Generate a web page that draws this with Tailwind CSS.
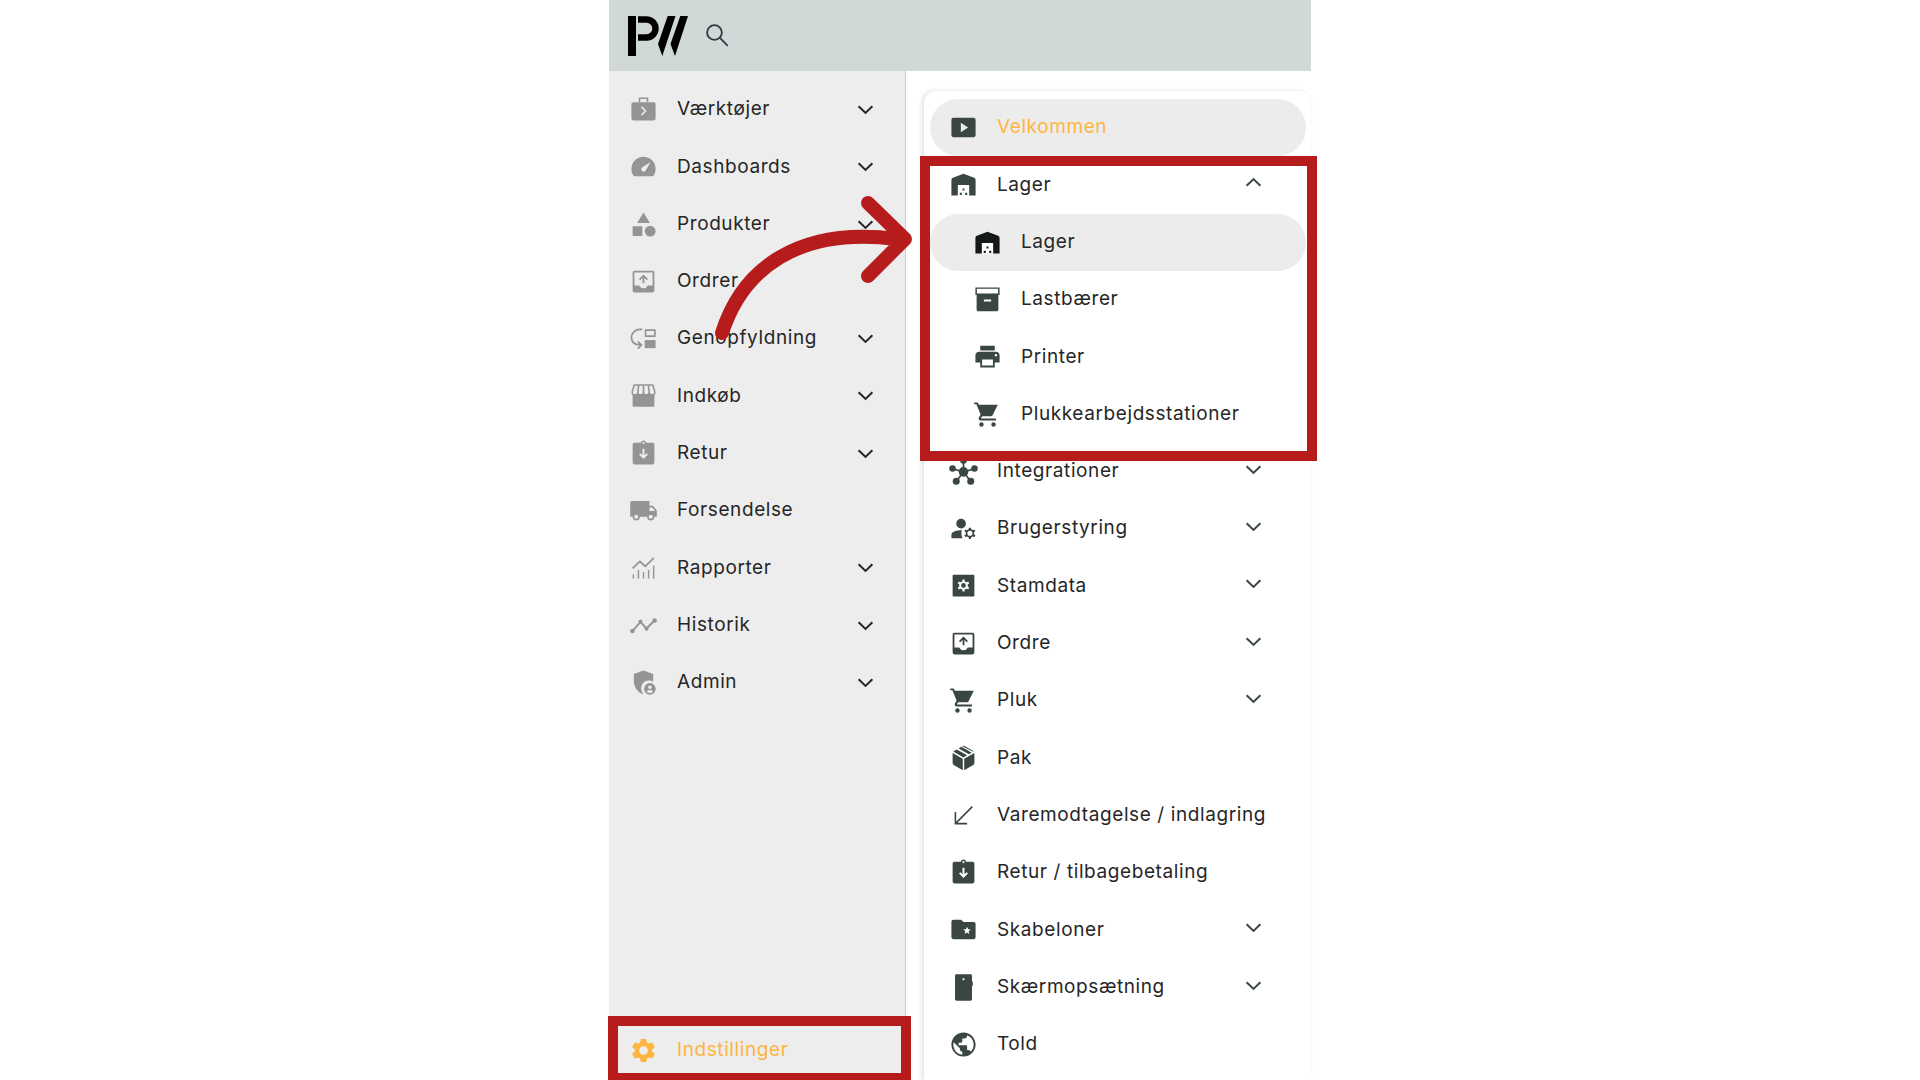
<!DOCTYPE html>
<html lang="da">
<head>
    <meta charset="UTF-8">
    <meta name="viewport" content="width=device-width, initial-scale=1.0">
    <title>Indstillinger - Lager</title>
    <script src="https://cdn.jsdelivr.net/npm/@tailwindcss/browser@4"></script>
</head>
<body class="bg-white font-['Inter',sans-serif] text-[19px] tracking-[0.03125em] text-[#262626] overflow-hidden">

    <!-- Ikoner -->
    <svg class="hidden" xmlns="http://www.w3.org/2000/svg">
        <symbol id="chevron" viewBox="0 0 24 24"><path fill="none" stroke="currentColor" stroke-width="1.7" d="M6.3 9.3 12 14.8l5.700-5.500"/></symbol>
        <symbol id="search" viewBox="0 0 24 24"><g fill="none" stroke="currentColor" stroke-width="1.500"><circle cx="9.500" cy="9.500" r="6.100"/><path d="m14 14 6.500 6.500"/></g></symbol>
        <symbol id="tools" viewBox="0 0 24 24">
            <path fill="none" stroke="currentColor" stroke-width="1.300" d="M8.700 6V2.700h6.600V6"/>
            <path fill="currentColor" d="M3.500 6h17A1.500 1.500 0 0 1 22 7.500v12a1.500 1.500 0 0 1-1.500 1.500h-17A1.500 1.500 0 0 1 2 19.500v-12A1.500 1.500 0 0 1 3.500 6z"/>
            <path fill="none" stroke="#ededed" stroke-width="1.300" d="m10.300 9.800 3.400 3.400-3.400 3.400"/>
        </symbol>
        <symbol id="gauge" viewBox="0 0 24 24"><path fill="currentColor" fill-rule="evenodd" d="M12 4A10 10 0 0 0 2 14c0 1.900.5 3.700 1.400 5.200.3.500.8.800 1.400.8h14.400c.6 0 1.100-.3 1.400-.8.9-1.500 1.400-3.300 1.400-5.200A10 10 0 0 0 12 4zm5.800 4.300-4.100 7.300a2 2 0 1 1-3-2.700z"/></symbol>
        <symbol id="shapes" viewBox="0 0 24 24"><g fill="currentColor"><path d="m12 2 5.300 8.700H6.700z"/><path d="M3 13.500h8v8H3z"/><circle cx="17.500" cy="17.500" r="4.500"/></g></symbol>
        <symbol id="outbox" viewBox="0 0 24 24">
            <path fill="currentColor" fill-rule="evenodd" d="M4.500 3h15A1.500 1.500 0 0 1 21 4.500v15a1.500 1.500 0 0 1-1.500 1.500h-15A1.500 1.500 0 0 1 3 19.500v-15A1.500 1.500 0 0 1 4.500 3zm0 1.500v10.800h3.900a4 4 0 0 0 7.200 0h3.900V4.500z"/>
            <path fill="none" stroke="currentColor" stroke-width="1.500" d="M12 13.500V7.300M8.800 10.400 12 7.200l3.200 3.200"/>
        </symbol>
        <symbol id="refill" viewBox="0 0 24 24">
            <path fill="none" stroke="currentColor" stroke-width="1.400" d="M11 4.500H9A7 7 0 0 0 2 11c0 4 2.800 6.300 7.500 6.300M7.300 14.300l3 3-3 3M13.700 5h7.700v5h-7.700z"/>
            <path fill="currentColor" d="M13 13.300h9V20h-9z"/>
        </symbol>
        <symbol id="store" viewBox="0 0 24 24">
            <path fill="currentColor" d="M3 11h18v9.500a.8.800 0 0 1-.8.800H3.800a.8.800 0 0 1-.8-.8z"/>
            <path fill="none" stroke="currentColor" stroke-width="1.300" d="M4.300 3.300h15.400l1.600 5.500c.3 1.700-.7 2.900-2.200 2.900-1.300 0-2.300-.9-2.400-2.200-.1 1.300-1 2.200-2.300 2.200S12.100 10.800 12 9.500c-.1 1.300-1.100 2.200-2.400 2.200s-2.200-.9-2.300-2.200c-.1 1.300-1.100 2.200-2.400 2.200-1.500 0-2.500-1.200-2.200-2.900zM12 3.300v6.200M8 3.300l-.7 6.200M16 3.300l.7 6.200"/>
        </symbol>
        <symbol id="return" viewBox="0 0 24 24">
            <path fill="currentColor" fill-rule="evenodd" d="M4.500 3h5.200a2.400 2.400 0 0 1 4.600 0h5.200A1.500 1.500 0 0 1 21 4.500v15a1.500 1.500 0 0 1-1.500 1.500h-15A1.500 1.500 0 0 1 3 19.500v-15A1.500 1.500 0 0 1 4.500 3zm7.500-.5a.9.900 0 1 0 0 1.800.9.900 0 0 0 0-1.800zM11.200 8v5.500L9.400 11.700l-1.100 1.100L12 16.500l3.700-3.700-1.100-1.100-1.800 1.800V8z"/>
        </symbol>
        <symbol id="truck" viewBox="0 0 24 24">
            <path fill="currentColor" fill-rule="evenodd" d="M2.500 4.200H17V8h3l3 4v5.200h-2a3 3 0 0 1-6 0H9a3 3 0 0 1-6 0H1V5.700a1.500 1.500 0 0 1 1.500-1.500zM6 15.500a1.700 1.700 0 1 0 0 3.400 1.700 1.700 0 0 0 0-3.400zm12 0a1.700 1.700 0 1 0 0 3.400 1.700 1.700 0 0 0 0-3.400zM17 9.500v3h4.600l-2.300-3z"/>
        </symbol>
        <symbol id="report" viewBox="0 0 24 24"><g fill="none" stroke="currentColor" stroke-width="1.500"><path d="M3 12.800 9 7l4.500 4L20.600 4"/><path stroke-width="1.200" d="M3.600 17.800V21M7.800 14v7M12 15.800V21M16.200 14v7M20.400 10.300V21"/></g></symbol>
        <symbol id="history" viewBox="0 0 24 24">
            <path fill="none" stroke="currentColor" stroke-width="1.600" d="m3 16.500 6.500-7.500 5 5.500L21 8"/>
            <g fill="currentColor"><circle cx="2.800" cy="16.500" r="1.900"/><circle cx="9.500" cy="8.700" r="1.600"/><circle cx="14.500" cy="14.700" r="1.600"/><circle cx="21.200" cy="7.800" r="1.900"/></g>
        </symbol>
        <symbol id="shield" viewBox="0 0 24 24">
            <path fill="currentColor" d="m12 2 8 3v6.300a6.500 6.500 0 0 0-8.700 9.400l.7 1C7.300 20.500 4 15.900 4 11V5z"/>
            <path fill="currentColor" fill-rule="evenodd" d="M17.300 12.500a4.800 4.800 0 1 0 0 9.600 4.800 4.800 0 0 0 0-9.600zm0 1.900a1.500 1.500 0 1 1 0 3 1.500 1.500 0 0 1 0-3zm0 3.900c1 0 2 .5 2.600 1.200a3.300 3.300 0 0 1-5.200 0c.6-.7 1.600-1.200 2.600-1.200z"/>
        </symbol>
        <symbol id="gear" viewBox="0 0 24 24"><path fill="currentColor" d="M19.140 12.940c.04-.3.060-.61.060-.94 0-.32-.02-.64-.07-.94l2.030-1.580a.49.490 0 0 0 .12-.61l-1.920-3.320a.488.488 0 0 0-.59-.22l-2.390.96c-.5-.38-1.030-.7-1.620-.94l-.36-2.540a.484.484 0 0 0-.48-.41h-3.840c-.24 0-.43.170-.47.410l-.36 2.540c-.59.240-1.130.570-1.620.940l-2.390-.96c-.22-.08-.47 0-.59.220L2.740 8.870c-.12.210-.08.470.120.610l2.030 1.580c-.05.300-.09.630-.09.940s.02.640.070.940l-2.030 1.580a.49.490 0 0 0-.12.610l1.920 3.320c.12.220.370.290.590.220l2.390-.96c.5.380 1.030.7 1.620.940l.36 2.540c.05.240.240.410.480.410h3.840c.24 0 .440-.17.470-.41l.36-2.540c.59-.24 1.130-.56 1.620-.94l2.390.96c.22.080.470 0 .590-.22l1.920-3.320c.12-.22.070-.47-.12-.61l-2.010-1.580zM12 15.600c-1.980 0-3.600-1.620-3.600-3.600s1.620-3.600 3.600-3.600 3.600 1.620 3.600 3.600-1.620 3.600-3.600 3.600z"/></symbol>
        <symbol id="play" viewBox="0 0 24 24"><path fill="currentColor" fill-rule="evenodd" d="M3.500 4h17A1.500 1.500 0 0 1 22 5.500v13a1.500 1.500 0 0 1-1.500 1.500h-17A1.500 1.500 0 0 1 2 18.500v-13A1.500 1.500 0 0 1 3.500 4zM9.800 8v8l6-4z"/></symbol>
        <symbol id="warehouse" viewBox="0 0 24 24">
            <path fill="currentColor" d="M12 3 3.200 6.500A2 2 0 0 0 2 8.300V21h5.300v-8.500h9.400V21H22V8.300a2 2 0 0 0-1.200-1.800z"/>
            <path fill="#fff" d="M7.600 12.500h8.800V21H7.600z"/>
            <path fill="currentColor" d="M11.200 15.300h1.600v1.600h-1.600zM8.900 18.900h1.700v1.700H8.900zM13.400 18.900h1.700v1.700h-1.700z"/>
        </symbol>
        <symbol id="archive" viewBox="0 0 24 24">
            <path fill="#fff" stroke="currentColor" stroke-width="1.200" d="M2.600 2.600h18.800v5H2.600z"/>
            <path fill="currentColor" fill-rule="evenodd" d="M3 8h18v12.500a1.200 1.200 0 0 1-1.200 1.200H4.200A1.200 1.200 0 0 1 3 20.500zm6 4v1.600h6V12z"/>
        </symbol>
        <symbol id="printer" viewBox="0 0 24 24"><path fill="currentColor" d="M19 8H5c-1.660 0-3 1.340-3 3v6h4v4h12v-4h4v-6c0-1.660-1.340-3-3-3zm-2.500 11.500h-9v-5h9zm2.500-7.500c-.55 0-1-.45-1-1s.45-1 1-1 1 .45 1 1-.45 1-1 1zM18 3H6v4h12z"/></symbol>
        <symbol id="cart" viewBox="0 0 24 24"><path fill="currentColor" d="M1 2h2.900l1 2H20.500l-4.300 8.600c-.3.500-.7.800-1.300.8H7.500l-1 1.900H19V17H6.300c-1.300 0-2-1.400-1.400-2.500l1.400-2.600L2.800 3.600H1z"/><circle cx="7" cy="20.300" r="1.800" fill="currentColor"/><circle cx="17" cy="20.300" r="1.800" fill="currentColor"/></symbol>
        <symbol id="hub" viewBox="0 0 24 24">
            <path fill="none" stroke="currentColor" stroke-width="1.400" d="M12 3v9M2.800 9.700 12 12.300l9.200-2.600M6 20.300l6-8 6 8"/>
            <g fill="currentColor"><circle cx="12" cy="12.300" r="4"/><circle cx="12" cy="2.800" r="2.700"/><circle cx="2.900" cy="9.600" r="2.700"/><circle cx="21.100" cy="9.600" r="2.700"/><circle cx="6" cy="20" r="2.900"/><circle cx="18" cy="20" r="2.900"/></g>
        </symbol>
        <symbol id="users" viewBox="0 0 24 24">
            <circle cx="10" cy="8" r="4" fill="currentColor"/>
            <path fill="currentColor" d="M10.700 13.500C7.500 13.200 5 13.900 3.200 15c-.8.500-1.200 1.300-1.200 2.200V20h9.300a7.500 7.500 0 0 1-.6-6.500z"/>
            <g fill="none" stroke="currentColor"><circle cx="17.300" cy="16" r="2.800" stroke-width="1.400"/><path stroke-width="1.800" d="M17.300 11.300v1.900M17.300 18.800v1.900M13.200 13.600l1.700 1M19.700 17.400l1.700 1M13.200 18.400l1.700-1M19.700 14.600l1.700-1"/></g>
        </symbol>
        <symbol id="data" viewBox="0 0 24 24">
            <path fill="currentColor" d="M4 3h16a1 1 0 0 1 1 1v16a1 1 0 0 1-1 1H4a1 1 0 0 1-1-1V4a1 1 0 0 1 1-1z"/>
            <g fill="none" stroke="#fff"><circle cx="12" cy="12" r="2.800" stroke-width="1.600"/><path stroke-width="1.800" d="M12 7v2M12 15v2M7.700 9.500l1.700 1M14.600 13.500l1.700 1M7.700 14.500l1.700-1M14.600 10.500l1.700-1"/></g>
        </symbol>
        <symbol id="package" viewBox="0 0 24 24"><path fill="currentColor" d="M3 8.200 11.400 13v9.500L4 18.300a2 2 0 0 1-1-1.700zM21 8.200 12.600 13v9.500l7.400-4.200a2 2 0 0 0 1-1.700zM3.500 7.100l3-1.700L15 10.200 12 12zM8 4.500l2.200-1.300 8.600 4.900-2.300 1.300zM11.500 2.400a1.500 1.500 0 0 1 1.300 0L20.400 6.800l-.5.5L11 2.700z"/></symbol>
        <symbol id="southwest" viewBox="0 0 24 24"><path fill="none" stroke="currentColor" stroke-width="1.300" d="M19.300 4.700 5.700 18.300M5.300 9v9.700H15"/></symbol>
        <symbol id="folder" viewBox="0 0 24 24"><path fill="currentColor" fill-rule="evenodd" d="M3.500 4H10l2 1.700h8.500A1.500 1.500 0 0 1 22 7.200v11.300a1.500 1.500 0 0 1-1.500 1.500h-17A1.500 1.500 0 0 1 2 18.500v-13A1.500 1.500 0 0 1 3.500 4zm11.400 5.700-.9 2.100-2.200.2 1.700 1.500-.5 2.200 1.900-1.200 1.900 1.200-.5-2.200L18 12l-2.200-.2z"/></symbol>
        <symbol id="device" viewBox="0 0 24 24"><path fill="currentColor" fill-rule="evenodd" d="M6.200 1h11.600A1.200 1.200 0 0 1 19 2.200v4.600l.7.400v3.200l-.7.500v10.900a1.200 1.200 0 0 1-1.200 1.200H6.200A1.200 1.200 0 0 1 5 21.800V2.200A1.200 1.200 0 0 1 6.200 1zM12 4.300a.9.900 0 1 0 0 1.800.9.900 0 0 0 0-1.800z"/></symbol>
        <symbol id="globe" viewBox="0 0 24 24"><path fill="currentColor" d="M12 2C6.480 2 2 6.480 2 12s4.480 10 10 10 10-4.480 10-10S17.520 2 12 2zm-1 18.500c-4.200-.5-7.400-4.100-7.400-8.500 0-.6.080-1.200.200-1.800L9 15v1c0 1.100.9 2 2 2zm6.900-2.500c-.26-.8-1-1.400-1.900-1.400h-1v-3c0-.55-.45-1-1-1H8v-2h2c.55 0 1-.45 1-1V7h2c1.100 0 2-.9 2-2v-.6c3.200 1.200 5.400 4.200 5.400 7.600 0 2.300-.9 4.500-2.500 6z"/></symbol>
    </svg>

    <div class="relative mx-auto flex min-h-screen max-w-[702px] flex-col">

        <!-- Topbar -->
        <header class="flex h-[71px] shrink-0 items-center gap-[15px] bg-[#d0d9d8] px-[19px]">
            <a href="#" aria-label="Forside">
                <svg class="h-10 w-15 text-black" viewBox="0 0 60 40" fill="currentColor">
                    <rect width="8" height="40"/>
                    <path fill="none" stroke="currentColor" stroke-width="6.400" d="M10 3.500h8.500a8.800 8.800 0 0 1 0 18H10"/>
                    <path d="M39.700 0h7.800L34.300 40 30 28zM52.300 0H60L47 40l-4.500-12z"/>
                </svg>
            </a>
            <button type="button" aria-label="Søg" class="text-[#2f3b3a]"><svg class="size-[29px]"><use href="#search"/></svg></button>
        </header>

        <div class="flex flex-1">
            <!-- Hovedmenu -->
            <aside class="flex w-[297px] shrink-0 flex-col border-r border-[#cccccc] bg-[#ededed]">
                <ul class="mt-[10px] grid h-[630px] grid-rows-11 [&_svg:first-child]:text-[#949494] [&_a]:flex [&_a]:h-full [&_a]:items-center [&_a]:gap-[19px] [&_a]:pl-5 [&_button]:flex [&_button]:h-full [&_button]:w-full [&_button]:items-center [&_button]:gap-[19px] [&_button]:pl-5 [&_button]:pr-[25px] [&_svg]:size-[29px] [&_svg]:shrink-0 [&_span]:flex-1 [&_span]:text-left">
                    <li><button type="button"><svg><use href="#tools"/></svg><span>Værktøjer</span><svg><use href="#chevron"/></svg></button></li>
                    <li><button type="button"><svg><use href="#gauge"/></svg><span>Dashboards</span><svg><use href="#chevron"/></svg></button></li>
                    <li><button type="button"><svg><use href="#shapes"/></svg><span>Produkter</span><svg><use href="#chevron"/></svg></button></li>
                    <li><a href="#"><svg><use href="#outbox"/></svg><span>Ordrer</span></a></li>
                    <li><button type="button"><svg><use href="#refill"/></svg><span>Genopfyldning</span><svg><use href="#chevron"/></svg></button></li>
                    <li><button type="button"><svg><use href="#store"/></svg><span>Indkøb</span><svg><use href="#chevron"/></svg></button></li>
                    <li><button type="button"><svg><use href="#return"/></svg><span>Retur</span><svg><use href="#chevron"/></svg></button></li>
                    <li><a href="#"><svg><use href="#truck"/></svg><span>Forsendelse</span></a></li>
                    <li><button type="button"><svg><use href="#report"/></svg><span>Rapporter</span><svg><use href="#chevron"/></svg></button></li>
                    <li><button type="button"><svg><use href="#history"/></svg><span>Historik</span><svg><use href="#chevron"/></svg></button></li>
                    <li><button type="button"><svg><use href="#shield"/></svg><span>Admin</span><svg><use href="#chevron"/></svg></button></li>
                </ul>
                <a href="#" class="relative mt-auto flex h-15 items-center gap-[19px] pl-5 text-[#ffb53f]">
                    <svg class="size-[29px]"><use href="#gear"/></svg>
                    <span>Indstillinger</span>
                    <span class="absolute -top-1 -right-[6px] -bottom-[3px] -left-px z-10 border-10 border-[#b71c1c]"></span>
                </a>
            </aside>

            <!-- Undermenu -->
            <main class="flex flex-1 flex-col bg-white pt-5 pl-[18px]">
                <ul class="grid flex-1 grid-rows-17 rounded-t-xl pt-2 pr-[5px] pb-[7px] pl-[6px] shadow-[-2px_0_4px_rgba(0,0,0,0.13)] [&_a]:flex [&_a]:h-full [&_a]:items-center [&_a]:gap-[19px] [&_a]:rounded-full [&_a]:pl-[19px] [&_button]:flex [&_button]:h-full [&_button]:w-full [&_button]:items-center [&_button]:gap-[19px] [&_button]:pl-[19px] [&_button]:pr-[38px] [&_svg]:size-[29px] [&_svg]:shrink-0 [&_svg]:text-[#394644] [&_span]:flex-1 [&_span]:text-left [&_svg:last-child]:mb-1">
                    <li><a href="#" class="bg-[#ececec] text-[#ffb53f]"><svg><use href="#play"/></svg><span>Velkommen</span></a></li>
                    <li class="relative row-span-5 grid grid-rows-5">
                        <button type="button" aria-expanded="true"><svg><use href="#warehouse"/></svg><span>Lager</span><svg class="rotate-180"><use href="#chevron"/></svg></button>
                        <ul class="row-span-4 grid grid-rows-4 [&_a]:pl-[43px]">
                            <li><a href="#" class="bg-[#ececec] [&>svg]:text-[#141918]!"><svg><use href="#warehouse"/></svg><span>Lager</span></a></li>
                            <li><a href="#"><svg><use href="#archive"/></svg><span>Lastbærer</span></a></li>
                            <li><a href="#"><svg><use href="#printer"/></svg><span>Printer</span></a></li>
                            <li><a href="#"><svg><use href="#cart"/></svg><span>Plukkearbejdsstationer</span></a></li>
                        </ul>
                        <div class="absolute top-0 -right-[11px] -bottom-[18px] -left-[10px] z-10 border-10 border-[#b71c1c] pointer-events-none"></div>
                    </li>
                    <li><button type="button"><svg><use href="#hub"/></svg><span>Integrationer</span><svg><use href="#chevron"/></svg></button></li>
                    <li><button type="button"><svg><use href="#users"/></svg><span>Brugerstyring</span><svg><use href="#chevron"/></svg></button></li>
                    <li><button type="button"><svg><use href="#data"/></svg><span>Stamdata</span><svg><use href="#chevron"/></svg></button></li>
                    <li><button type="button"><svg><use href="#outbox"/></svg><span>Ordre</span><svg><use href="#chevron"/></svg></button></li>
                    <li><button type="button"><svg><use href="#cart"/></svg><span>Pluk</span><svg><use href="#chevron"/></svg></button></li>
                    <li><a href="#"><svg><use href="#package"/></svg><span>Pak</span></a></li>
                    <li><a href="#"><svg><use href="#southwest"/></svg><span>Varemodtagelse / indlagring</span></a></li>
                    <li><a href="#"><svg><use href="#return"/></svg><span>Retur / tilbagebetaling</span></a></li>
                    <li><button type="button"><svg><use href="#folder"/></svg><span>Skabeloner</span><svg><use href="#chevron"/></svg></button></li>
                    <li><button type="button"><svg><use href="#device"/></svg><span>Skærmopsætning</span><svg><use href="#chevron"/></svg></button></li>
                    <li><a href="#"><svg><use href="#globe"/></svg><span>Told</span></a></li>
                </ul>
            </main>
        </div>

        <!-- Pil hen til Lager -->
        <svg class="pointer-events-none absolute top-[190px] left-[101px] z-20 h-[160px] w-[210px]" viewBox="0 0 210 160" fill="none" stroke="#b71c1c" stroke-width="14" stroke-linecap="round" stroke-linejoin="round">
            <path d="M12 143C32 80 87 36 187 49M158 13l37 36-37 37"/>
        </svg>
    </div>
</body>
</html>
